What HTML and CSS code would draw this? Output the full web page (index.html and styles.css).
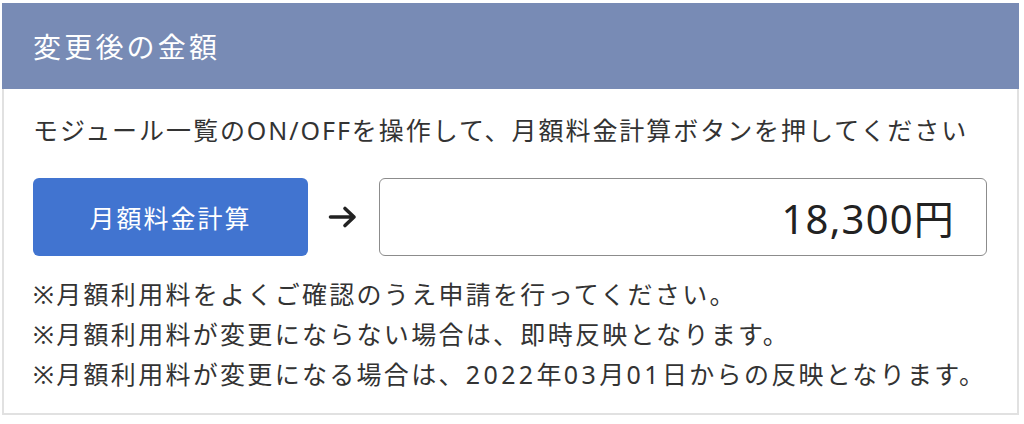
FILE: index.html
```html
<!DOCTYPE html>
<html lang="ja">
<head>
<meta charset="utf-8">
<title>変更後の金額</title>
<link rel="stylesheet" href="styles.css">
</head>
<body>
<section class="panel">
  <h2 class="panel-head">変更後の金額</h2>
  <div class="panel-body">
    <p class="lead">モジュール一覧のON/OFFを操作して、月額料金計算ボタンを押してください</p>
    <div class="calc-row">
      <button class="calc-btn" type="button">月額料金計算</button>
      <svg class="arrow" width="30" height="24" viewBox="0 0 30 24" aria-hidden="true">
        <path d="M2.5 12H26M17 3.5L26 12L17 20.5" fill="none" stroke="#222" stroke-width="3.6" stroke-linecap="round" stroke-linejoin="round"/>
      </svg>
      <div class="result">18,300円</div>
    </div>
    <ul class="notes">
      <li>※月額利用料をよくご確認のうえ申請を行ってください。</li>
      <li>※月額利用料が変更にならない場合は、即時反映となります。</li>
      <li>※月額利用料が変更になる場合は、<span class="num">2022</span>年<span class="num">03</span>月<span class="num">01</span>日からの反映となります。</li>
    </ul>
  </div>
</section>
</body>
</html>
```
FILE: styles.css
```css
html, body {
  margin: 0;
  padding: 0;
  background: #ffffff;
}
body {
  font-family: "Noto Sans", "Noto Sans CJK JP", sans-serif;
  color: #333333;
}
.panel {
  margin: 3px 5px 0 2px;
  width: 1017px;
}
.panel-head {
  margin: 0;
  height: 86px;
  display: flex;
  align-items: center;
  padding-left: 31px;
  background: #788bb5;
  color: #ffffff;
  font-size: 28px;
  font-weight: 400;
  letter-spacing: 3.2px;
}
.panel-body {
  border: 2px solid #e1e1e1;
  border-top: none;
  padding: 21px 30px 19px 29px;
}
.lead {
  margin: 0;
  font-size: 25px;
  line-height: 40px;
  letter-spacing: 1.95px;
  white-space: nowrap;
}
.calc-row {
  display: flex;
  align-items: center;
  margin-top: 28px;
  gap: 20px;
}
.calc-btn {
  width: 275px;
  height: 78px;
  border: none;
  border-radius: 6px;
  background: #4174d0;
  color: #ffffff;
  font-family: inherit;
  font-size: 25px;
  letter-spacing: 2px;
  padding: 0;
}
.arrow {
  display: block;
  flex: none;
  margin-right: 1px;
}
.result {
  flex: 1;
  height: 78px;
  box-sizing: border-box;
  border: 1.5px solid #8c8c8c;
  border-radius: 6px;
  display: flex;
  align-items: center;
  justify-content: flex-end;
  padding-right: 31px;
  font-size: 40px;
  letter-spacing: 1.2px;
  color: #222222;
}
.notes {
  list-style: none;
  margin: 18px 0 0;
  padding: 0;
  font-size: 25px;
  line-height: 40px;
  letter-spacing: 2.3px;
  white-space: nowrap;
}
.num {
  letter-spacing: 3.4px;
}
```
